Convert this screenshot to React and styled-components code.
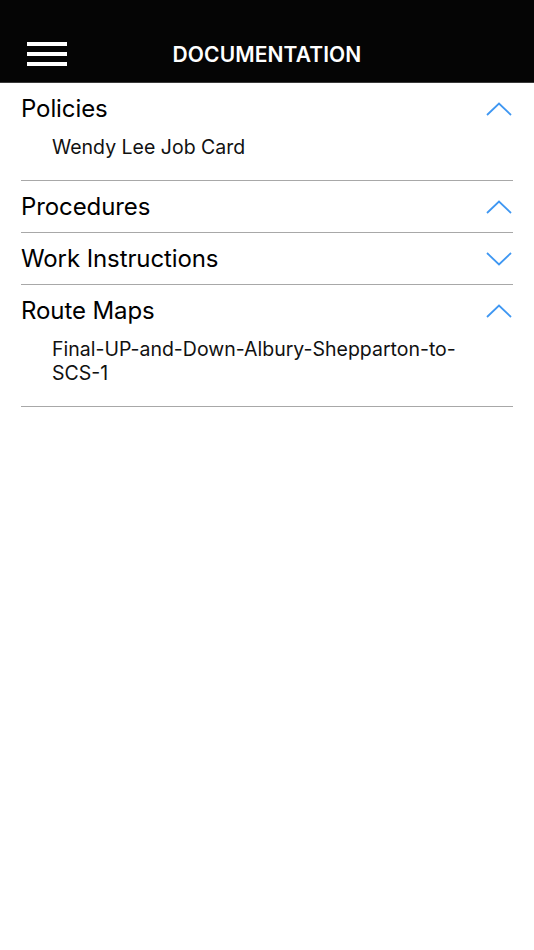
import React, { useState } from "react";
import styled, { createGlobalStyle } from "styled-components";

const GlobalStyle = createGlobalStyle`
  body {
    margin: 0;
    background: #ffffff;
    font-family: Inter, "Liberation Sans", Arial, sans-serif;
    -webkit-font-smoothing: antialiased;
  }
`;

const sections = [
  { title: "Policies", items: ["Wendy Lee Job Card"], open: true },
  { title: "Procedures", items: [], open: true },
  { title: "Work Instructions", items: [], open: false },
  { title: "Route Maps", items: ["Final-UP-and-Down-Albury-Shepparton-to-SCS-1"], open: true },
];

function Chevron({ up }) {
  return (
    <ChevronSvg width="26" height="14" viewBox="0 0 26 14" $up={up}>
      <polyline points="1,13 13,1.5 25,13" fill="none" stroke="#3f97f2" strokeWidth="1.8" />
    </ChevronSvg>
  );
}

function Section({ title, items, open }) {
  const [isOpen, setIsOpen] = useState(open);
  return (
    <Group>
      <GroupHead onClick={() => setIsOpen(!isOpen)}>
        <GroupTitle>{title}</GroupTitle>
        <Chevron up={isOpen} />
      </GroupHead>
      {isOpen && items.length > 0 && (
        <ItemList>
          {items.map((it) => (
            <Item key={it}>{it}</Item>
          ))}
        </ItemList>
      )}
    </Group>
  );
}

export default function App() {
  return (
    <Page>
      <GlobalStyle />
      <TopBar>
        <MenuButton aria-label="menu">
          <Bar />
          <Bar />
          <Bar />
        </MenuButton>
        <Title>DOCUMENTATION</Title>
      </TopBar>
      <List>
        {sections.map((s) => (
          <Section key={s.title} {...s} />
        ))}
      </List>
    </Page>
  );
}

const Page = styled.div`
  width: 534px;
  min-height: 950px;
  background: #fff;
`;

const TopBar = styled.header`
  height: 83px;
  background: #050505;
  border-bottom: 1px solid #3a3a3a;
  display: flex;
  align-items: flex-end;
  justify-content: center;
  position: relative;
  padding-bottom: 15px;
  box-sizing: border-box;
`;

const MenuButton = styled.div`
  position: absolute;
  left: 27px;
  top: 42px;
  width: 40px;
  display: flex;
  flex-direction: column;
  gap: 6px;
`;

const Bar = styled.span`
  display: block;
  height: 4px;
  background: #fff;
`;

const Title = styled.h1`
  margin: 0;
  color: #fff;
  font-size: 21px;
  font-weight: 600;
  letter-spacing: 0.1px;
  line-height: 24px;
`;

const List = styled.div`
  padding: 0 21px;
`;

const Group = styled.section`
  border-bottom: 1px solid #a8a8a8;
`;

const GroupHead = styled.div`
  height: 51px;
  display: flex;
  align-items: center;
  justify-content: space-between;
  cursor: pointer;
`;

const GroupTitle = styled.span`
  font-size: 24px;
  color: #000;
  letter-spacing: -0.1px;
`;

const ChevronSvg = styled.svg`
  margin-right: 1px;
  transform: ${(p) => (p.$up ? "none" : "rotate(180deg)")};
`;

const ItemList = styled.div`
  padding: 1px 30px 21px 31px;
`;

const Item = styled.div`
  font-size: 19.5px;
  line-height: 24px;
  color: #111;
`;
